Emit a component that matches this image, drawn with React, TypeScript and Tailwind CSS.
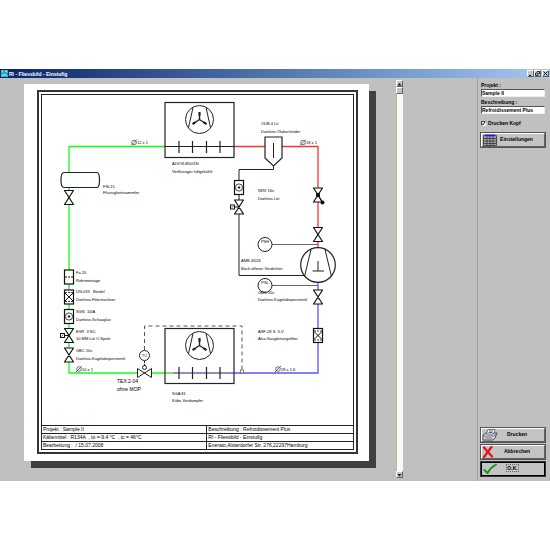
import { useState } from "react";

const labels: { x: number; y: number; text: string }[] = [
  { x: 137, y: 144, text: "12 x 1" },
  { x: 172, y: 165, text: "ALV/VLB50/1N" },
  { x: 172, y: 173, text: "Verflüssiger luftgekühlt" },
  { x: 261, y: 125, text: "OUB 4 Lit" },
  { x: 261, y: 133, text: "Danfoss Ölabscheider" },
  { x: 306, y: 144, text: "18 x 1" },
  { x: 103, y: 188, text: "FSL15" },
  { x: 103, y: 194, text: "Flüssigkeitssammler" },
  { x: 258, y: 192, text: "NRV 16s" },
  { x: 258, y: 200, text: "Danfoss Löt" },
  { x: 241, y: 262, text: "AMB 4/026" },
  { x: 241, y: 270, text: "Bock offener Verdichter" },
  { x: 258, y: 294, text: "GBC 10s" },
  { x: 258, y: 301, text: "Danfoss-Kugelabsperrventil" },
  { x: 258, y: 333, text: "ASF-28 S  3-V" },
  { x: 258, y: 340, text: "Alco-Saugleitungsfilter" },
  { x: 76, y: 274, text: "Fa 20" },
  { x: 76, y: 282, text: "Rohrmontage" },
  { x: 76, y: 293, text: "DN-033   Bördel" },
  { x: 76, y: 301, text: "Danfoss-Filtertrockner" },
  { x: 76, y: 313, text: "SGN  10IA" },
  { x: 76, y: 321, text: "Danfoss-Schauglas" },
  { x: 76, y: 333, text: "EVR  3 NC" },
  { x: 76, y: 340, text: "10 MM Löt O.Spule" },
  { x: 76, y: 352, text: "GBC 10s" },
  { x: 76, y: 360, text: "Danfoss-Kugelabsperrventil" },
  { x: 82, y: 371, text: "10 x 1" },
  { x: 172, y: 395, text: "SGA 81" },
  { x: 172, y: 402, text: "Küba Verdampfer" },
  { x: 281, y: 371, text: "28 x 1.6" },
];

const titleBlock = [
  ["Projekt : Sample II", "Beschreibung : Refroidissement Plus"],
  ["Kältemittel : R134A  , to =-9.4 °C  , tc = 46°C", "RI - Fliessbild - Einstufig"],
  ["Bearbeitung :  / 15.07.2008", "Enerato,Alsterdorfer Str. 276,22297Hamburg"],
];

const raised =
  "border border-t-white border-l-white border-r-[#606060] border-b-[#606060] bg-[#c4c4c4]";

function Valve({ x, y }: { x: number; y: number }) {
  return (
    <path
      d={`M${x - 4.5} ${y - 7}h9L${x - 4.5} ${y + 7}h9z`}
      fill="white"
      stroke="#111"
      strokeWidth="1.2"
      strokeLinejoin="round"
    />
  );
}

function Solenoid({ x, y }: { x: number; y: number }) {
  return (
    <g fill="white" stroke="#111">
      <path d={`M${x} ${y}h-4`} />
      <rect x={x - 8.5} y={y - 2} width="4" height="4" />
      <path d={`M${x - 7.5} ${y + 1}l2 -2`} strokeWidth="0.6" />
    </g>
  );
}

function Cartridge({ x, y, kind }: { x: number; y: number; kind: "plain" | "drier" | "glass" }) {
  return (
    <g fill="white" stroke="#111">
      <rect x={x - 4.5} y={y - 7} width="9" height="14" strokeWidth="1.2" />
      {kind === "plain" && <path d={`M${x - 4} ${y}h8`} strokeDasharray="2 1" />}
      {kind === "drier" && (
        <>
          <path d={`M${x - 4} ${y - 4}L${x + 4} ${y + 4}M${x + 4} ${y - 4}L${x - 4} ${y + 4}`} />
          <path d={`M${x - 4} ${y - 4.5}h8M${x - 4} ${y + 4.5}h8`} strokeDasharray="2 1" strokeWidth="0.8" />
        </>
      )}
      {kind === "glass" && (
        <>
          <circle cx={x} cy={y} r="3.6" strokeWidth="0.8" />
          <circle cx={x} cy={y} r="0.8" fill="#111" />
        </>
      )}
    </g>
  );
}

function Exchanger({ y }: { y: number }) {
  return (
    <g fill="none" stroke="#222">
      <rect x="165" y={y} width="69" height="55" fill="white" strokeWidth="1.2" />
      <circle cx="199.5" cy={y + 17} r="14" />
      <path d={`M193 ${y + 5}l-4.5 20M206 ${y + 5}l4.5 20`} />
      <path d={`M199.5 ${y + 17}v-6M199.5 ${y + 17}l-6 4M199.5 ${y + 17}l6 4`} strokeWidth="1.4" />
      <path d={`M199.5 ${y + 13}v-3.5M195.5 ${y + 19.6}l-3 2M203.5 ${y + 19.6}l3 2`} strokeWidth="2.2" />
      <path
        d={`M179 ${y + 38.5}v12M192.5 ${y + 38.5}v12M206.5 ${y + 38.5}v12M220 ${y + 38.5}v12`}
        strokeWidth="1.2"
      />
    </g>
  );
}

function Diameter({ x, y }: { x: number; y: number }) {
  return (
    <g fill="none" stroke="#333" strokeWidth="0.7">
      <circle cx={x} cy={y} r="2.3" />
      <path d={`M${x - 3} ${y + 3}l6 -6`} />
    </g>
  );
}

function FlowDiagram() {
  return (
    <svg viewBox="42 95 311 330" className="block h-auto w-full" role="img" aria-label="RI - Fliessbild">
      <g fill="none" strokeWidth="1.3">
        <path d="M165 146.5H69V373H165" stroke="#1f1" />
        <path d="M234 146.5H318V248" stroke="#f33" />
        <path d="M318 282V373H234" stroke="#55f" />
      </g>

      <Exchanger y={102.5} />
      <Exchanger y={328.5} />
      <path d="M165 146.5h69" stroke="#222" />
      <path d="M165 373h8" stroke="#1a1" />
      <path d="M173 373h61" stroke="#226" strokeWidth="1.2" />

      <g fill="none" stroke="#222">
        <path d="M273.5 166v3.5H239V275.5H306" />
        <path d="M272 244.5h46M272 285.5h46" stroke="#666" />
        <path d="M265 137h17v21l-8.5 8l-8.5 -8z" fill="white" strokeWidth="1.2" />
        <path d="M273.5 143v15" />
        <path
          d="M64 172.500h33q2.500 0 2.500 7.500t-2.500 7.500H64q-3 0 -3 -7.500t3 -7.500z"
          fill="white"
          strokeWidth="1.2"
        />
        <path d="M144.5 350V326H242V370" stroke="#555" strokeDasharray="4 3" />
        <rect x="240.5" y="370" width="3" height="3" fill="white" stroke="#555" strokeWidth="0.7" />
      </g>

      <Valve x={69} y={197.5} />
      <Cartridge x={69} y={277} kind="plain" />
      <Cartridge x={69} y={297} kind="drier" />
      <Cartridge x={69} y={316.5} kind="glass" />
      <Valve x={69} y={335.5} />
      <Solenoid x={69} y={335.5} />
      <Valve x={69} y={355} />

      <Cartridge x={239} y={187.5} kind="glass" />
      <Valve x={239} y={207} />
      <Solenoid x={239} y={207} />

      <Valve x={318} y={195} />
      <circle cx="318" cy="195" r="2.2" fill="#111" />
      <path d="M318 195l4 7" stroke="#111" />
      <circle cx="322.5" cy="202.5" r="2" fill="#111" />
      <Valve x={318} y={234.5} />
      <Valve x={318} y={297} />
      <Cartridge x={318} y={335.5} kind="drier" />

      <g fill="white" stroke="#222">
        <circle cx="318" cy="265" r="17.3" strokeWidth="1.2" />
        <path d="M311 249.5l-6.5 27M325 249.5l6.5 27M318 261v10M312.5 271h11.5" />
        <circle cx="265" cy="244.5" r="7" />
        <circle cx="265" cy="285.5" r="7" />
        <path d="M144.5 361v5" strokeDasharray="2 1" />
        <circle cx="144.5" cy="355.5" r="5" />
        <path d="M137.5 368.5v9l14 -9v9z" strokeLinejoin="round" />
        <circle cx="144.5" cy="367.5" r="2" />
      </g>

      <Diameter x={134} y={142.5} />
      <Diameter x={303} y={142.5} />
      <Diameter x={79} y={369} />
      <Diameter x={278} y={369} />

      <g fill="black" className="text-[4px]">
        {labels.map((l) => (
          <text key={`${l.x}-${l.y}`} x={l.x} y={l.y} className="whitespace-pre">
            {l.text}
          </text>
        ))}
        <text x="265" y="243" textAnchor="middle">PSH</text>
        <text x="265" y="284" textAnchor="middle">PSL</text>
        <text x="144.5" y="357" textAnchor="middle">TC</text>
      </g>
      <g fill="black" className="text-[5px]">
        <text x="117" y="383">TEX 2-04</text>
        <text x="117" y="391">ohne MOP</text>
      </g>
    </svg>
  );
}

function TitleBar() {
  return (
    <header className="flex h-[9px] items-center gap-px bg-linear-to-r from-[#0a246a] to-[#a6caf0] px-px">
      <svg viewBox="0 0 7 7" className="size-[7px]" aria-hidden="true">
        <rect width="7" height="7" fill="#20b8c8" />
        <path d="M1 1l2 2M4 1l2 1M1 6l3 -2l2 2" stroke="#fff" strokeWidth="0.8" fill="none" />
        <path d="M3 1v3M5 4h2" stroke="#157080" />
      </svg>
      <h1 className="flex-1 text-[5px] leading-[8px] font-bold text-white">RI - Fliessbild - Einstufig</h1>
      <div className="flex">
        <button aria-label="Minimieren" className={`flex size-[7px] items-center justify-center ${raised}`}>
          <svg viewBox="0 0 5 5" className="size-[5px]">
            <path d="M1 4.5h2" stroke="#111" />
          </svg>
        </button>
        <button aria-label="Wiederherstellen" className={`flex size-[7px] items-center justify-center ${raised}`}>
          <svg viewBox="0 0 5 5" className="size-[5px]">
            <path d="M2 .5h2.5v2.5M.5 2h2.5v2.5h-2.5z" fill="none" stroke="#111" strokeWidth="0.8" />
          </svg>
        </button>
        <button aria-label="Schliessen" className={`ml-px flex size-[7px] items-center justify-center ${raised}`}>
          <svg viewBox="0 0 5 5" className="size-[5px]">
            <path d="M.5 .5l4 4M4.5 .5l-4 4" stroke="#111" />
          </svg>
        </button>
      </div>
    </header>
  );
}

function ScrollBar() {
  return (
    <div className="mt-0.5 mb-[3px] flex w-[7px] flex-col bg-[#fbfbf6]">
      <button aria-label="Nach oben" className={`flex h-[7px] items-center justify-center ${raised}`}>
        <svg viewBox="0 0 5 4" className="h-1 w-[5px]">
          <path d="M2.5 1l2 2.5h-4z" fill="#111" />
        </svg>
      </button>
      <div className={`h-[7px] ${raised}`} />
      <div className="flex-1 border-l border-[#b4b4a8]" />
      <button aria-label="Nach unten" className={`flex h-[7px] items-center justify-center ${raised}`}>
        <svg viewBox="0 0 5 4" className="h-1 w-[5px]">
          <path d="M2.5 3.5l2 -2.5h-4z" fill="#111" />
        </svg>
      </button>
    </div>
  );
}

function Sidebar() {
  const [project, setProject] = useState("Sample II");
  const [description, setDescription] = useState("Refroidissement Plus");
  const [printHeader, setPrintHeader] = useState(true);
  const field =
    "h-2 w-full border border-t-[#555] border-l-[#555] border-r-[#eee] border-b-[#eee] bg-white text-[5px] leading-[6px] font-bold";
  const action = `flex h-[14px] w-full items-center outline outline-[#555] ${raised}`;

  return (
    <aside className="flex w-[73px] flex-col border-l border-[#a2a2a2] pt-1 pr-[5px] pb-[5px] pl-[3px] text-[5px] font-bold">
      <label htmlFor="project" className="leading-[7px]">Projekt :</label>
      <input id="project" className={field} value={project} onChange={(e) => setProject(e.target.value)} />
      <label htmlFor="description" className="mt-0.5 leading-[7px]">Beschreibung :</label>
      <input
        id="description"
        className={field}
        value={description}
        onChange={(e) => setDescription(e.target.value)}
      />
      <label className="relative mt-1.5 flex items-center gap-0.5 leading-[7px]">
        <input
          type="checkbox"
          checked={printHeader}
          onChange={(e) => setPrintHeader(e.target.checked)}
          className="size-[5px] appearance-none border border-t-[#444] border-l-[#444] border-r-[#eee] border-b-[#eee] bg-white"
        />
        {printHeader && (
          <svg viewBox="0 0 5 5" className="pointer-events-none absolute left-0 size-[5px]">
            <path d="M1 2.5l1 1.3l2 -3" fill="none" stroke="#111" />
          </svg>
        )}
        Drucken Kopf
      </label>
      <button className={`mt-1.5 ${action}`}>
        <svg viewBox="0 0 14 12" className="ml-px h-3 w-[14px]" aria-hidden="true">
          <path d="M.5 1.5h13v10h-13z" fill="#aaa" stroke="#333" strokeWidth="0.8" />
          <path
            d="M.5 4.5h13M.5 7h13M.5 9.5h13M4 3v8.5M7 3v8.5M10 3v8.5"
            stroke="#333"
            strokeWidth="0.8"
          />
          <path d="M2 .5h10v2H2z" fill="#22d" />
        </svg>
        <span className="flex-1 pr-2 text-center">Einstellungen</span>
      </button>

      <div className="mt-auto flex flex-col gap-[3px]">
        <button className={action}>
          <svg viewBox="0 0 16 12" className="h-3 w-4" aria-hidden="true">
            <path d="M1 6l3 -2h11l-2 5l-2 2h-10z" fill="#ddd" stroke="#333" strokeWidth="0.8" />
            <path d="M4.5 5l1.5 -4.5h7l-1.5 4.5z" fill="#fff" stroke="#444" strokeWidth="0.7" />
            <path d="M7 2h4M6.5 3.5h4" stroke="#55e" />
            <path d="M1 7h11M3 9h7M12 7l2 -2" stroke="#555" strokeWidth="0.8" fill="none" />
          </svg>
          <span className="flex-1 pr-2 text-center">Drucken</span>
        </button>
        <button className={action}>
          <svg viewBox="0 0 12 12" className="size-3" aria-hidden="true">
            <path d="M2 1.5l8 9M9.5 1l-7.5 10" stroke="#e8101c" strokeWidth="2.2" strokeLinecap="round" />
          </svg>
          <span className="flex-1 pr-1 text-center">Abbrechen</span>
        </button>
        <button className="flex h-[14px] w-full items-center border border-black bg-[#c4c4c4] outline outline-[#333]">
          <svg viewBox="0 0 14 12" className="ml-px h-3 w-[14px]" aria-hidden="true">
            <path
              d="M1.5 7l3 3q3 -5.500 8.500 -8.500"
              fill="none"
              stroke="#0a9a1c"
              strokeWidth="1.9"
              strokeLinecap="round"
            />
          </svg>
          <span className="flex-1 pr-4 text-center">
            <span className="border border-dotted border-[#666]">O.K.</span>
          </span>
        </button>
      </div>
    </aside>
  );
}

export default function App() {
  return (
    <div className="min-h-screen bg-white pt-[69px] font-['Liberation_Sans',Arial,sans-serif] text-black">
      <TitleBar />
      <main className="flex bg-[#c0c0c0]">
        <div className="flex-1 pt-1.5 pr-[27px] pb-5 pl-6">
          <article className="bg-white pt-1.5 pr-[11px] pb-[7px] pl-[13px] shadow-[7px_7px_0_#404040]">
            <div className="border-2 border-[#333] p-0.5">
              <div className="border border-[#222]">
                <FlowDiagram />
                <table className="w-full table-fixed border-collapse text-[5px] leading-[7px]">
                  <tbody>
                    {titleBlock.map(([left, right]) => (
                      <tr key={left} className="border-t border-[#222]">
                        <td className="w-[53%] border-r border-[#222] p-0 pl-px whitespace-pre">{left}</td>
                        <td className="p-0 pl-px whitespace-pre">{right}</td>
                      </tr>
                    ))}
                  </tbody>
                </table>
              </div>
            </div>
          </article>
        </div>
        <ScrollBar />
        <div className="w-[74px]" />
        <Sidebar />
      </main>
    </div>
  );
}
